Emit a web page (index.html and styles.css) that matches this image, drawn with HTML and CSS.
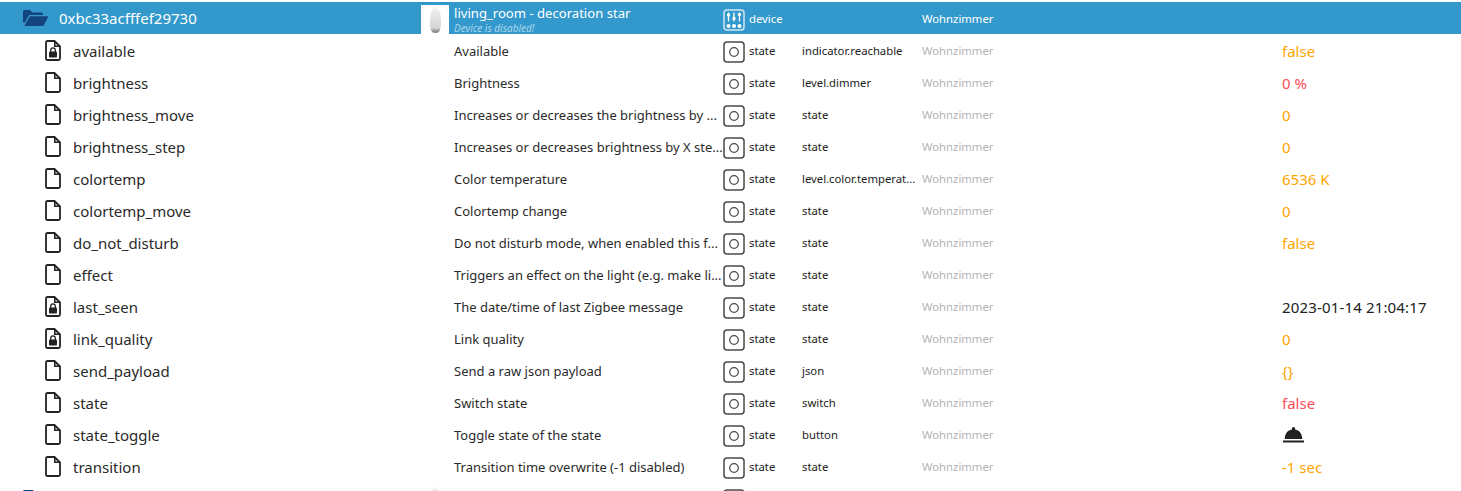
FILE: index.html
```html
<!DOCTYPE html>
<html lang="en">
<head>
<meta charset="utf-8">
<title>Objects</title>
<link rel="stylesheet" href="styles.css">
</head>
<body>
<svg class="defs" width="0" height="0" aria-hidden="true">
  <symbol id="file" viewBox="0 0 16 21">
    <path d="M2.500 1h7L15 6.500V18.500A1.500 1.500 0 0 1 13.500 20H2.500A1.500 1.500 0 0 1 1 18.500V2.500A1.500 1.500 0 0 1 2.500 1Z" fill="none" stroke="#222" stroke-width="1.800" stroke-linejoin="round"/>
    <path d="M9.800 1.500V6.300H14.500" fill="none" stroke="#222" stroke-width="1.600"/>
  </symbol>
  <symbol id="lockfile" viewBox="0 0 16 21">
    <path d="M2.500 1h7L15 6.500V18.500A1.500 1.500 0 0 1 13.500 20H2.500A1.500 1.500 0 0 1 1 18.500V2.500A1.500 1.500 0 0 1 2.500 1Z" fill="none" stroke="#222" stroke-width="1.800" stroke-linejoin="round"/>
    <path d="M9.800 1.500V6.300H14.500" fill="none" stroke="#222" stroke-width="1.600"/>
    <rect x="4" y="11.500" width="8" height="6" rx="1" fill="#222"/>
    <path d="M5.700 12V10.200a2.300 2.300 0 0 1 4.600 0V12" fill="none" stroke="#222" stroke-width="1.300"/>
  </symbol>
  <symbol id="state" viewBox="0 0 22 22">
    <rect x="1" y="1" width="20" height="20" rx="3" fill="#fff" stroke="#4a4a4a" stroke-width="1.500"/>
    <circle cx="11" cy="11" r="4.300" fill="none" stroke="#4a4a4a" stroke-width="1.300"/>
  </symbol>
</svg>

<main class="tree">
  <div class="row head">
    <div class="name-cell">
      <svg class="folder" viewBox="0 0 25 16" aria-hidden="true">
        <path d="M0 1.500A1.500 1.500 0 0 1 1.500 0h5.500l2.500 2.500h9a1.500 1.500 0 0 1 1.500 1.500v1H6L1.800 12.500H0Z" fill="#14457f"/>
        <path d="M6.800 6.200H24a1 1 0 0 1 .9 1.400L21 15a2 2 0 0 1-1.800 1H1.200Z" fill="#14457f"/>
      </svg>
      <span class="head-name">0xbc33acfffef29730</span>
    </div>
    <div class="title-cell">
      <div class="thumb"><div class="bulb"></div></div>
      <div class="title-stack">
        <div class="head-title">living_room - decoration star</div>
        <div class="disabled">Device is disabled!</div>
      </div>
    </div>
    <div class="icon-cell">
      <svg class="device" viewBox="0 0 22 22" aria-hidden="true">
        <rect x="1" y="1" width="20" height="20" rx="3" fill="none" stroke="#cfe6f3" stroke-width="1.500"/>
        <path d="M5.500 3.500v9M11 3.500v9M16.500 3.500v9" stroke="#fff" stroke-width="1.300"/>
        <circle cx="5.500" cy="6" r="1.700" fill="#fff"/><circle cx="11" cy="9.500" r="1.700" fill="#fff"/><circle cx="16.500" cy="5.500" r="1.700" fill="#fff"/>
        <circle cx="5.500" cy="17" r="2" fill="#fff"/><circle cx="11" cy="17" r="2" fill="#fff"/><circle cx="16.500" cy="17" r="2" fill="#fff"/>
      </svg>
    </div>
    <div class="type">device</div>
    <div class="role"></div>
    <div class="room">Wohnzimmer</div>
    <div class="value"></div>
  </div>

  <div class="row"><div class="name-cell"><svg class="file"><use href="#lockfile"/></svg><span class="name">available</span></div><div class="title-cell"><span class="title">Available</span></div><div class="icon-cell"><svg class="state"><use href="#state"/></svg></div><div class="type">state</div><div class="role">indicator.reachable</div><div class="room">Wohnzimmer</div><div class="value orange">false</div></div>
  <div class="row"><div class="name-cell"><svg class="file"><use href="#file"/></svg><span class="name">brightness</span></div><div class="title-cell"><span class="title">Brightness</span></div><div class="icon-cell"><svg class="state"><use href="#state"/></svg></div><div class="type">state</div><div class="role">level.dimmer</div><div class="room">Wohnzimmer</div><div class="value red">0 %</div></div>
  <div class="row"><div class="name-cell"><svg class="file"><use href="#file"/></svg><span class="name">brightness_move</span></div><div class="title-cell"><span class="title">Increases or decreases the brightness by ...</span></div><div class="icon-cell"><svg class="state"><use href="#state"/></svg></div><div class="type">state</div><div class="role">state</div><div class="room">Wohnzimmer</div><div class="value orange">0</div></div>
  <div class="row"><div class="name-cell"><svg class="file"><use href="#file"/></svg><span class="name">brightness_step</span></div><div class="title-cell"><span class="title">Increases or decreases brightness by X ste...</span></div><div class="icon-cell"><svg class="state"><use href="#state"/></svg></div><div class="type">state</div><div class="role">state</div><div class="room">Wohnzimmer</div><div class="value orange">0</div></div>
  <div class="row"><div class="name-cell"><svg class="file"><use href="#file"/></svg><span class="name">colortemp</span></div><div class="title-cell"><span class="title">Color temperature</span></div><div class="icon-cell"><svg class="state"><use href="#state"/></svg></div><div class="type">state</div><div class="role">level.color.temperat...</div><div class="room">Wohnzimmer</div><div class="value orange">6536 K</div></div>
  <div class="row"><div class="name-cell"><svg class="file"><use href="#file"/></svg><span class="name">colortemp_move</span></div><div class="title-cell"><span class="title">Colortemp change</span></div><div class="icon-cell"><svg class="state"><use href="#state"/></svg></div><div class="type">state</div><div class="role">state</div><div class="room">Wohnzimmer</div><div class="value orange">0</div></div>
  <div class="row"><div class="name-cell"><svg class="file"><use href="#file"/></svg><span class="name">do_not_disturb</span></div><div class="title-cell"><span class="title">Do not disturb mode, when enabled this f...</span></div><div class="icon-cell"><svg class="state"><use href="#state"/></svg></div><div class="type">state</div><div class="role">state</div><div class="room">Wohnzimmer</div><div class="value orange">false</div></div>
  <div class="row"><div class="name-cell"><svg class="file"><use href="#file"/></svg><span class="name">effect</span></div><div class="title-cell"><span class="title">Triggers an effect on the light (e.g. make li...</span></div><div class="icon-cell"><svg class="state"><use href="#state"/></svg></div><div class="type">state</div><div class="role">state</div><div class="room">Wohnzimmer</div><div class="value"></div></div>
  <div class="row"><div class="name-cell"><svg class="file"><use href="#lockfile"/></svg><span class="name">last_seen</span></div><div class="title-cell"><span class="title">The date/time of last Zigbee message</span></div><div class="icon-cell"><svg class="state"><use href="#state"/></svg></div><div class="type">state</div><div class="role">state</div><div class="room">Wohnzimmer</div><div class="value dark">2023-01-14 21:04:17</div></div>
  <div class="row"><div class="name-cell"><svg class="file"><use href="#lockfile"/></svg><span class="name">link_quality</span></div><div class="title-cell"><span class="title">Link quality</span></div><div class="icon-cell"><svg class="state"><use href="#state"/></svg></div><div class="type">state</div><div class="role">state</div><div class="room">Wohnzimmer</div><div class="value orange">0</div></div>
  <div class="row"><div class="name-cell"><svg class="file"><use href="#file"/></svg><span class="name">send_payload</span></div><div class="title-cell"><span class="title">Send a raw json payload</span></div><div class="icon-cell"><svg class="state"><use href="#state"/></svg></div><div class="type">state</div><div class="role">json</div><div class="room">Wohnzimmer</div><div class="value orange">{}</div></div>
  <div class="row"><div class="name-cell"><svg class="file"><use href="#file"/></svg><span class="name">state</span></div><div class="title-cell"><span class="title">Switch state</span></div><div class="icon-cell"><svg class="state"><use href="#state"/></svg></div><div class="type">state</div><div class="role">switch</div><div class="room">Wohnzimmer</div><div class="value red">false</div></div>
  <div class="row"><div class="name-cell"><svg class="file"><use href="#file"/></svg><span class="name">state_toggle</span></div><div class="title-cell"><span class="title">Toggle state of the state</span></div><div class="icon-cell"><svg class="state"><use href="#state"/></svg></div><div class="type">state</div><div class="role">button</div><div class="room">Wohnzimmer</div><div class="value bell-cell"><svg class="bell" viewBox="0 0 21 16" aria-hidden="true"><path d="M10.500 0a1.600 1.600 0 0 1 1.600 1.600v1c4.200.7 7 4 7.200 9.400H1.700c.2-5.400 3-8.700 7.200-9.400v-1A1.600 1.600 0 0 1 10.500 0Z" fill="#222"/><rect y="13.500" width="21" height="2" fill="#222"/></svg></div></div>
  <div class="row"><div class="name-cell"><svg class="file"><use href="#file"/></svg><span class="name">transition</span></div><div class="title-cell"><span class="title">Transition time overwrite (-1 disabled)</span></div><div class="icon-cell"><svg class="state"><use href="#state"/></svg></div><div class="type">state</div><div class="role">state</div><div class="room">Wohnzimmer</div><div class="value orange">-1 sec</div></div>

  <div class="row peek">
    <div class="name-cell"><svg class="folder" viewBox="0 0 25 16" aria-hidden="true"><path d="M0 1.500A1.500 1.500 0 0 1 1.500 0h8.500l2 2.500V16H0Z" fill="#14457f"/></svg></div>
    <div class="title-cell"><div class="thumb"><div class="bulb"></div></div></div>
    <div class="icon-cell"><svg class="state"><use href="#state"/></svg></div>
  </div>
</main>
</body>
</html>
```

FILE: styles.css
```css
html, body {
  margin: 0;
  padding: 0;
  height: 491px;
  overflow: hidden;
  background: #fff;
}
body {
  font-family: "Noto Sans", "Open Sans", sans-serif;
  color: #222;
}
.defs { display: block; height: 0; }
.tree { padding-top: 2px; }
.row {
  display: grid;
  grid-template-columns: 421px 302px 26px 53px 120px 360px 1fr;
  height: 32px;
  align-items: center;
  white-space: nowrap;
}
.row > * { min-width: 0; }
.head { background: #3399cc; color: #fff; }
.name-cell {
  display: flex;
  align-items: center;
  padding-left: 45px;
}
.head .name-cell, .peek .name-cell { padding-left: 23px; }
.folder { width: 25px; height: 16px; flex: none; margin-right: 11px; }
.head-name { font-size: 15px; }
.file { width: 16px; height: 21px; flex: none; margin-right: 12px; }
.name { font-size: 15px; color: #2a2a2a; padding-top: 2px; }
.title-cell {
  display: flex;
  align-items: center;
  padding-left: 33px;
}
.head .title-cell, .peek .title-cell { padding-left: 0; }
.title { font-size: 13px; color: #2a2a2a; padding-top: 2px; }
.thumb {
  width: 28px;
  height: 29px;
  margin-top: 3px;
  margin-right: 5px;
  background: #fff;
  flex: none;
  display: flex;
  justify-content: center;
  align-items: center;
}
.bulb {
  width: 11px;
  height: 26px;
  border-radius: 50% 50% 35% 35%;
  background: linear-gradient(#f4f4f4, #e0e0e0 45%, #d6d6d6 80%, #8c8c8c 95%);
}
.head-title { font-size: 13.1px; line-height: 15px; margin-top: 3px; }
.disabled { font-size: 10px; font-style: italic; color: #a9d5ec; line-height: 11px; margin-top: 2px; }
.icon-cell { display: flex; align-items: center; padding-top: 3px; }
.state, .device { width: 22px; height: 22px; display: block; }
.type, .role, .room { font-size: 11.3px; }
.room { color: #b4b4b4; }
.head .room { color: #fff; }
.value { font-size: 15px; padding-top: 2px; }
.bell-cell { padding-top: 1px; }
.orange { color: #ffa500; }
.red { color: #ff4d5a; }
.dark { color: #222; letter-spacing: .16px; }
.bell { width: 21px; height: 16px; display: block; margin-left: 1px; }
```
